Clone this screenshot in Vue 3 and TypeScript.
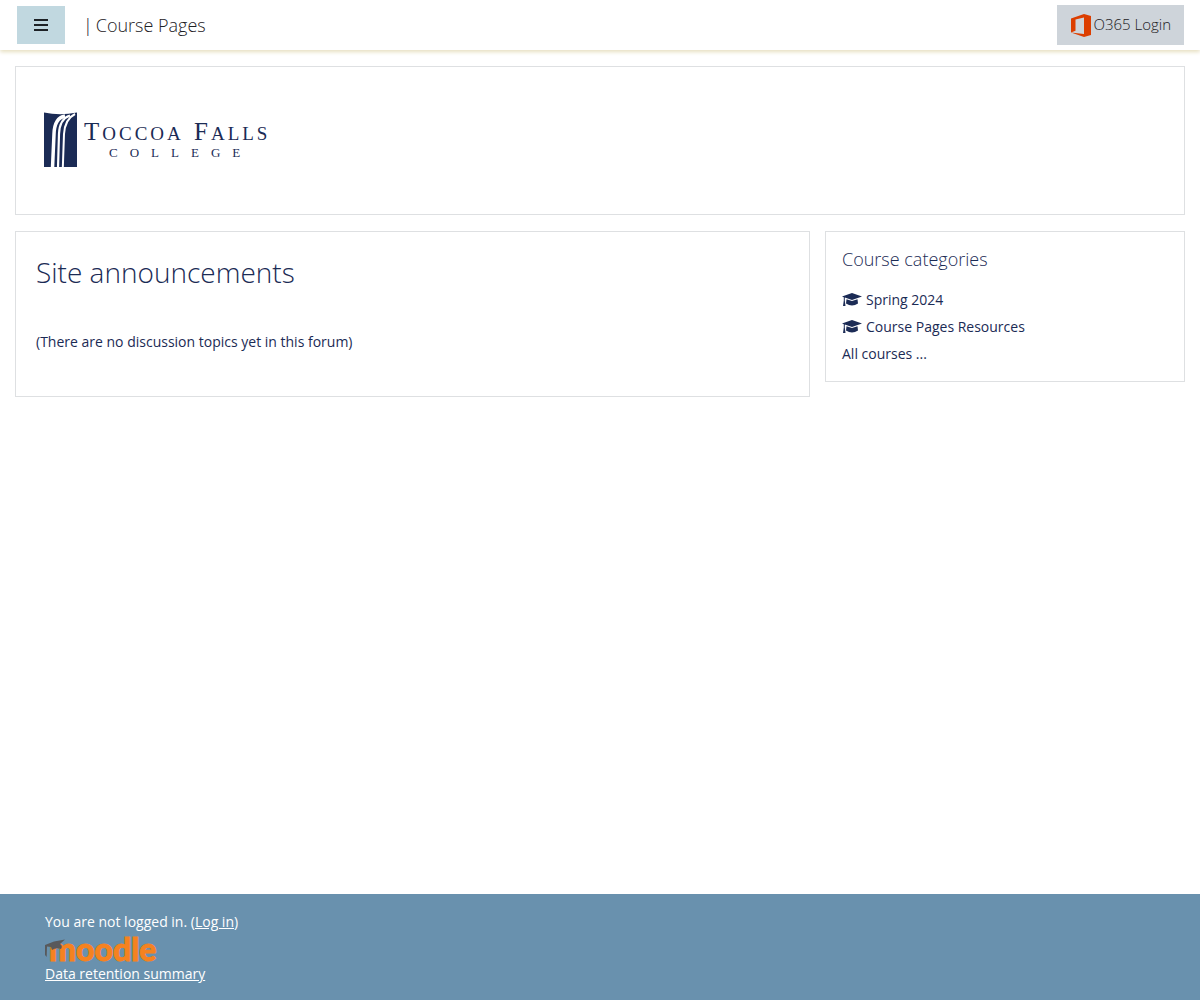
<script setup lang="ts">
import { ref } from 'vue'

interface Category {
  id: number
  name: string
}

const drawerOpen = ref(false)
const categories: Category[] = [
  { id: 1, name: 'Spring 2024' },
  { id: 2, name: 'Course Pages Resources' },
]
</script>

<template>
  <div class="page">
    <header class="navbar">
      <button
        class="drawer-toggle"
        type="button"
        aria-label="Side panel"
        :aria-expanded="drawerOpen"
        @click="drawerOpen = !drawerOpen"
      >
        <svg width="14" height="12" viewBox="0 0 14 12" aria-hidden="true">
          <path d="M0 1h14M0 6h14M0 11h14" stroke="#1d2125" stroke-width="2" />
        </svg>
      </button>
      <a class="brand" href="#"><span>|</span><span>Course Pages</span></a>
      <a class="login" href="#">
        <svg width="21" height="24" viewBox="0 0 21 24" aria-hidden="true">
          <path
            fill="#dc3e00"
            fill-rule="evenodd"
            d="M1 5.500 14 1 21 3V22L14 24 1 19.500 14 21V4.500L5.500 6.500V17.700L1 19.500Z"
          />
        </svg>
        <span>O365 Login</span>
      </a>
    </header>

    <div class="content">
      <section class="card banner">
        <svg class="college-logo" width="232" height="65" viewBox="0 0 232 65" role="img" aria-label="Toccoa Falls College">
          <path fill="#1b2b55" d="M4 4.500Q20 8 37 4.500V59H4Z" />
          <g fill="none" stroke="#fff">
            <path stroke-width="3.500" d="M12.500 60 14 26Q14.500 10 25 8" />
            <path stroke-width="2.200" d="M18 60 19 26Q19.500 11 30 7.500" />
            <path stroke-width="2" d="M22.800 60 24 26Q25 11 35 6" />
          </g>
          <g class="college-name">
            <text x="44" y="32"><tspan class="cap">T</tspan>OCCOA</text>
            <text x="154" y="32"><tspan class="cap">F</tspan>ALLS</text>
            <text class="college-sub" x="69" y="49">COLLEGE</text>
          </g>
        </svg>
      </section>

      <div class="columns">
        <main class="card announcements">
          <h2>Site announcements</h2>
          <p>(There are no discussion topics yet in this forum)</p>
        </main>
        <aside class="card categories">
          <h5>Course categories</h5>
          <ul>
            <li v-for="category in categories" :key="category.id">
              <a href="#">
                <svg width="20" height="14" viewBox="0 0 20 14" aria-hidden="true">
                  <path d="M10 0 20 3.500 10 7 2.800 4.600V7.500L3.500 13H1L1.800 7.500V4.300L0 3.500Z" />
                  <path d="M4.500 6.200 10 8 15.500 6.200 16 10.500Q10 14.500 4 10.500Z" />
                </svg>
                {{ category.name }}
              </a>
            </li>
          </ul>
          <a href="#">All courses ...</a>
        </aside>
      </div>
    </div>

    <footer>
      <div>You are not logged in. (<a href="#">Log in</a>)</div>
      <a class="moodle" href="#" aria-label="Moodle">
        <svg width="116" height="30" viewBox="0 0 116 30" aria-hidden="true">
          <text x="4" y="28">moodle</text>
          <path fill="#58595b" d="M0 12 9 8.500 20 6.500 15 11Q18 13 16 16 11 14 7 17L6 14 2 13.500 1.700 24 0 22Z" />
        </svg>
      </a>
      <a href="#">Data retention summary</a>
    </footer>
  </div>
</template>

<style>
body {
  margin: 0;
}
</style>

<style scoped>
.page {
  min-height: 100vh;
  display: flex;
  flex-direction: column;
  background: #fff;
  color: #1b2b55;
  font-family: "Open Sans", "Noto Sans", sans-serif;
  font-size: 14px;
  line-height: 22px;
}

a {
  color: inherit;
  text-decoration: none;
}

.navbar {
  display: flex;
  align-items: center;
  height: 50px;
  padding: 0 16px;
  box-shadow: 0 2px 4px #e6dfc0;
}

.drawer-toggle {
  display: flex;
  align-items: center;
  justify-content: center;
  width: 50px;
  height: 40px;
  padding: 0;
  border: 1px solid #fff;
  background: #c1d8e0;
}

.brand {
  display: flex;
  gap: 3px;
  margin-left: 17px;
  color: #1d2125;
  font-size: 18px;
  font-weight: 300;
}

.login {
  display: flex;
  align-items: center;
  gap: 2px;
  height: 40px;
  margin-left: auto;
  padding: 0 13px;
  background: #ced4da;
  color: #1d2125;
  font-size: 15px;
  font-weight: 300;
}

.login span {
  padding-bottom: 3px;
}

.content {
  flex: 1;
  padding: 16px 15px;
}

.card {
  box-sizing: border-box;
  border: 1px solid #dee0e2;
}

.banner {
  padding: 41px 24px;
}

.college-logo {
  display: block;
}

.college-name {
  fill: #1b2b55;
  font-family: "Liberation Serif", serif;
  font-size: 19px;
  letter-spacing: 3px;
}

.cap {
  font-size: 25px;
}

.college-sub {
  font-size: 13px;
  letter-spacing: 12px;
}

.columns {
  display: flex;
  align-items: flex-start;
  gap: 15px;
  margin-top: 16px;
}

.announcements {
  flex: 1;
  padding: 20px 20px 43px;
}

h2 {
  margin: 0 0 39px;
  font-size: 28px;
  font-weight: 300;
  line-height: 40px;
}

p {
  margin: 0;
}

.categories {
  width: 360px;
  padding: 16px;
}

h5 {
  margin: 0 0 19px;
  font-size: 18px;
  font-weight: 300;
  line-height: 22px;
}

ul {
  margin: 0;
  padding: 0;
  list-style: none;
}

li {
  margin-bottom: 5px;
}

li a {
  display: flex;
  align-items: center;
  gap: 4px;
}

li svg {
  fill: #1b2b55;
}

footer {
  display: flex;
  flex-direction: column;
  align-items: flex-start;
  padding: 17px 45px 15px;
  background: #6991ae;
  color: #fff;
}

footer a {
  text-decoration: underline;
}

.moodle svg {
  display: block;
}

.moodle text {
  fill: #f58220;
  stroke: #f58220;
  stroke-width: 1px;
  font-family: Lato, sans-serif;
  font-size: 32px;
  font-weight: 900;
}
</style>
